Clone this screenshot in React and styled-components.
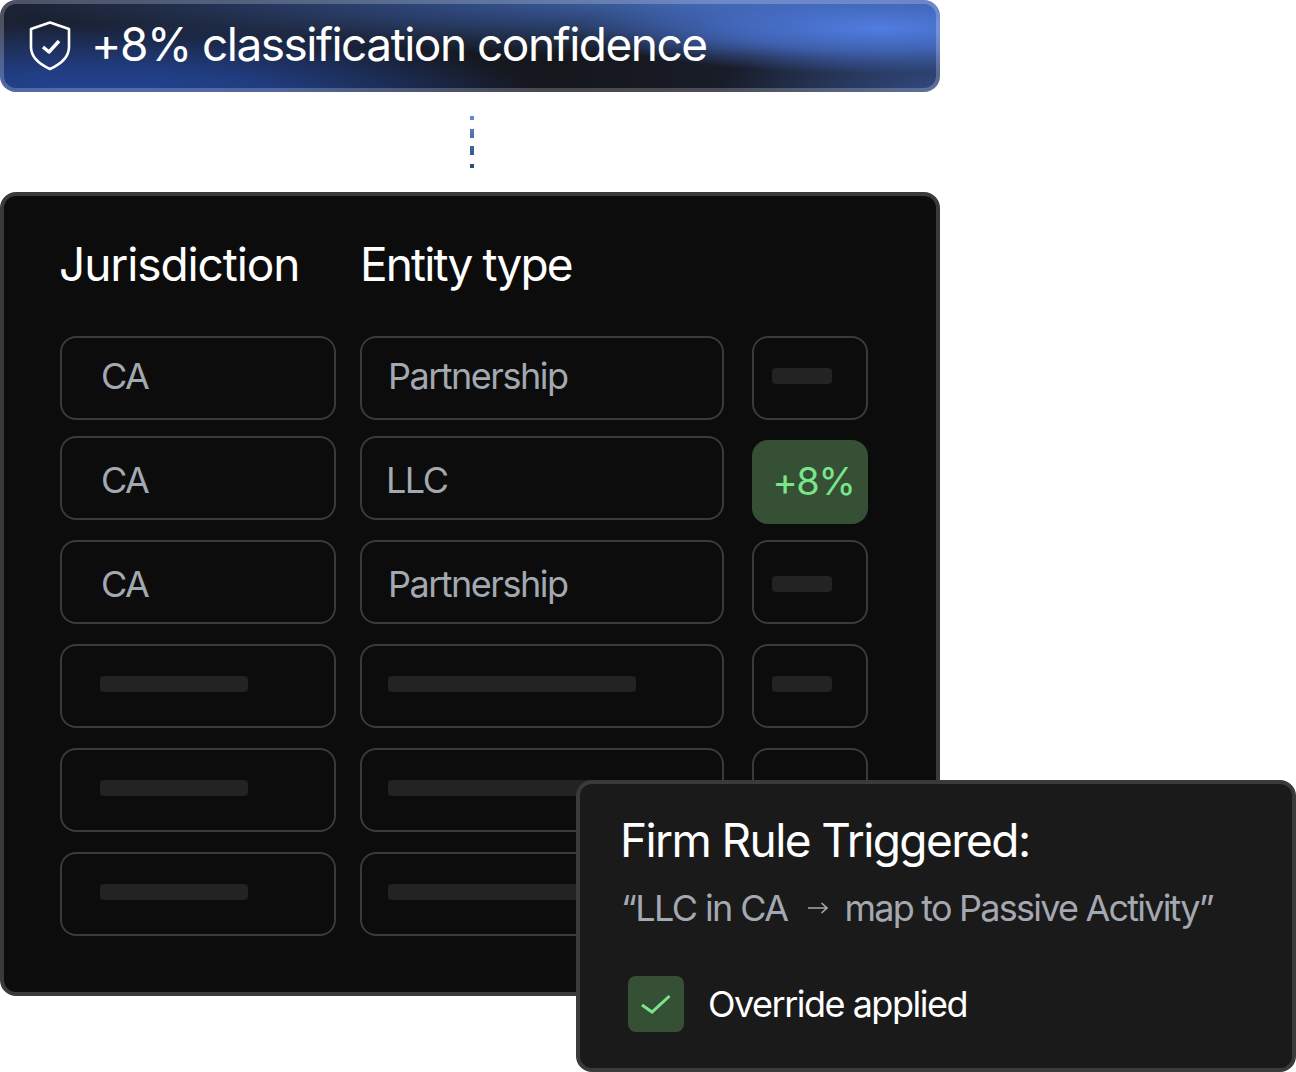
import React from "react";
import styled, { createGlobalStyle } from "styled-components";

const Global = createGlobalStyle`
  html, body { margin: 0; padding: 0; background: #fff; }
  body { font-family: Inter, "Liberation Sans", sans-serif; font-variation-settings: "opsz" 32; }
`;

const Page = styled.div`
  position: relative;
  width: 1296px;
  height: 1072px;
  overflow: hidden;
`;
const Column = styled.div`
  display: flex;
  flex-direction: column;
  align-items: center;
  width: 940px;
`;
const Banner = styled.div`
  box-sizing: border-box;
  width: 100%;
  height: 92px;
  border-radius: 16px;
  display: flex;
  align-items: center;
  gap: 19px;
  padding: 0 0 2px 28px;
  color: #fff;
  font-size: 46px;
  letter-spacing: -1.5px;
  background:
    radial-gradient(ellipse 300px 46px at 880px 28px, rgba(80,125,225,1) 0%, rgba(72,112,205,.75) 50%, rgba(60,95,170,0) 100%),
    radial-gradient(ellipse 430px 78px at 110px 100px, rgba(35,68,150,1) 0%, rgba(35,68,150,.8) 40%, rgba(35,68,150,0) 100%),
    radial-gradient(ellipse 720px 56px at 720px 0, rgba(66,104,178,1) 0%, rgba(50,80,140,.7) 50%, rgba(30,40,70,0) 100%),
    radial-gradient(ellipse 220px 70px at 940px 92px, rgba(50,75,130,1) 0%, rgba(50,75,130,0) 100%),
    linear-gradient(90deg, #1b2234 0%, #15171d 60%, #1d2438 100%);
  box-shadow: inset 0 0 0 4px rgba(255,255,255,.22);
  span { margin-top: -2px; }
`;
const ShieldIcon = styled.svg`
  width: 44px;
  height: 52px;
  flex: none;
  fill: none;
  stroke: #fff;
  stroke-linejoin: round;
  stroke-linecap: butt;
  path:first-child { stroke-width: 2.6; }
  path:last-child { stroke-width: 3.4; }
`;
const Connector = styled.div`
  width: 4px;
  height: 52px;
  margin: 24px 0 24px 4px;
  background: linear-gradient(180deg, #5f8fd0 0%, #2c4a78 100%);
  mask: linear-gradient(180deg, #000 0 4px, transparent 4px 13px, #000 13px 22px, transparent 22px 30px, #000 30px 39px, transparent 39px 48px, #000 48px 52px);
`;
const Panel = styled.div`
  box-sizing: border-box;
  width: 100%;
  height: 804px;
  border: 4px solid #3a3a3a;
  border-radius: 16px;
  background: #0c0c0c;
  padding: 20px 0 0 56px;
`;
const HeaderRow = styled.div`
  display: flex;
  height: 96px;
  align-items: center;
  color: #fff;
  font-size: 46px;
  margin-bottom: 24px;
  margin-left: -1px;
`;
const HeaderCell = styled.div`
  width: ${(p) => p.$w}px;
  flex: none;
  letter-spacing: ${(p) => p.$ls}px;
  white-space: nowrap;
`;
const Rows = styled.div`
  display: flex;
  flex-direction: column;
`;
const Row = styled.div`
  display: grid;
  grid-template-columns: 276px 364px 120px;
  column-gap: 24px;
  height: ${(p) => p.$h || 84}px;
  margin-bottom: ${(p) => p.$gap ?? 20}px;
  & > :nth-child(3) { margin-left: 4px; }
`;
const Cell = styled.div`
  box-sizing: border-box;
  height: 84px;
  border: 2px solid #3a3a3a;
  border-radius: 16px;
  display: flex;
  align-items: center;
  padding: ${(p) => (p.$low ? "4px" : "0")} 0 ${(p) => (p.$low ? "0" : "4px")} ${(p) => p.$pad}px;
  color: #a4a8b0;
  font-size: 36px;
  letter-spacing: -1.5px;
`;
const Bar = styled.div`
  width: ${(p) => p.$w}px;
  height: 16px;
  border-radius: 4px;
  background: #232323;
`;
const Delta = styled.div`
  box-sizing: border-box;
  margin-top: 4px;
  height: 84px;
  border-radius: 16px;
  background: #365036;
  color: #7be58b;
  font-size: 38px;
  letter-spacing: -1.4px;
  display: flex;
  align-items: center;
  justify-content: center;
  padding: 0 0 2px 7px;
`;
const Popover = styled.div`
  position: absolute;
  left: 576px;
  top: 780px;
  box-sizing: border-box;
  width: 720px;
  height: 292px;
  border: 4px solid #3a3a3a;
  border-radius: 16px;
  background: #1a1a1a;
  padding: 29px 0 0 40px;
`;
const RuleTitle = styled.div`
  color: #fff;
  font-size: 46px;
  line-height: 54px;
  letter-spacing: -1.6px;
  white-space: nowrap;
`;
const RuleText = styled.div`
  display: flex;
  align-items: center;
  margin-top: 19px;
  margin-left: 1px;
  color: #a4a8b0;
  font-size: 36px;
  line-height: 44px;
  letter-spacing: -1.6px;
  white-space: nowrap;
`;
const RuleTail = styled.span`
  letter-spacing: -1.78px;
`;
const ArrowIcon = styled.svg`
  width: 20px;
  height: 14px;
  margin: 0 17px 0 20px;
  fill: none;
  stroke: #a4a8b0;
  stroke-width: 1.6;
`;
const Applied = styled.div`
  display: flex;
  align-items: center;
  gap: 24px;
  margin: 46px 0 0 8px;
  color: #fff;
  font-size: 36px;
  letter-spacing: -1.5px;
`;
const CheckTile = styled.div`
  width: 56px;
  height: 56px;
  border-radius: 8px;
  background: #365036;
  display: flex;
  align-items: center;
  justify-content: center;
`;
const CheckIcon = styled.svg`
  width: 32px;
  height: 22px;
  fill: none;
  stroke: #7be58b;
  stroke-width: 3;
`;

const rows = [
  { a: "CA", b: "Partnership", bPad: 26 },
  { a: "CA", b: "LLC", bPad: 24, delta: "+8%", low: true, h: 88, gap: 16 },
  { a: "CA", b: "Partnership", bPad: 26, low: true },
  { ab: true },
  { ab: true },
  { ab: true },
];

export default function App() {
  return (
    <Page>
      <Global />
      <Column>
        <Banner>
          <ShieldIcon viewBox="0 0 44 52">
            <path d="M22 3.5 L41 10 V28 C41 38 33 45 22 50 C11 45 3 38 3 28 V10 Z" />
            <path d="M15 28 L21 33 L31 22" />
          </ShieldIcon>
          <span>+8% classification confidence</span>
        </Banner>
        <Connector />
        <Panel>
          <HeaderRow>
            <HeaderCell $w={301} $ls={-1.1}>Jurisdiction</HeaderCell>
            <HeaderCell $w={300} $ls={-1.9}>Entity type</HeaderCell>
          </HeaderRow>
          <Rows>
            {rows.map((r, i) => (
              <Row key={i} $h={r.h} $gap={i === 0 ? 16 : r.gap}>
                <Cell $pad={r.ab ? 38 : 39} $low={r.low}>
                  {r.ab ? <Bar $w={148} /> : r.a}
                </Cell>
                <Cell $pad={r.ab ? 26 : r.bPad} $low={r.low}>
                  {r.ab ? <Bar $w={248} /> : r.b}
                </Cell>
                {r.delta ? (
                  <Delta>{r.delta}</Delta>
                ) : (
                  <Cell $pad={18} $low={r.low}>
                    <Bar $w={60} />
                  </Cell>
                )}
              </Row>
            ))}
          </Rows>
        </Panel>
      </Column>
      <Popover>
        <RuleTitle>Firm Rule Triggered:</RuleTitle>
        <RuleText>
          “LLC in CA
          <ArrowIcon viewBox="0 0 20 14">
            <path d="M0 7 H19 M13.5 2 L19 7 L13.5 12" />
          </ArrowIcon>
          <RuleTail>map to Passive Activity”</RuleTail>
        </RuleText>
        <Applied>
          <CheckTile>
            <CheckIcon viewBox="0 0 32 22">
              <path d="M2 12 L12 19 L29.5 3" />
            </CheckIcon>
          </CheckTile>
          Override applied
        </Applied>
      </Popover>
    </Page>
  );
}
